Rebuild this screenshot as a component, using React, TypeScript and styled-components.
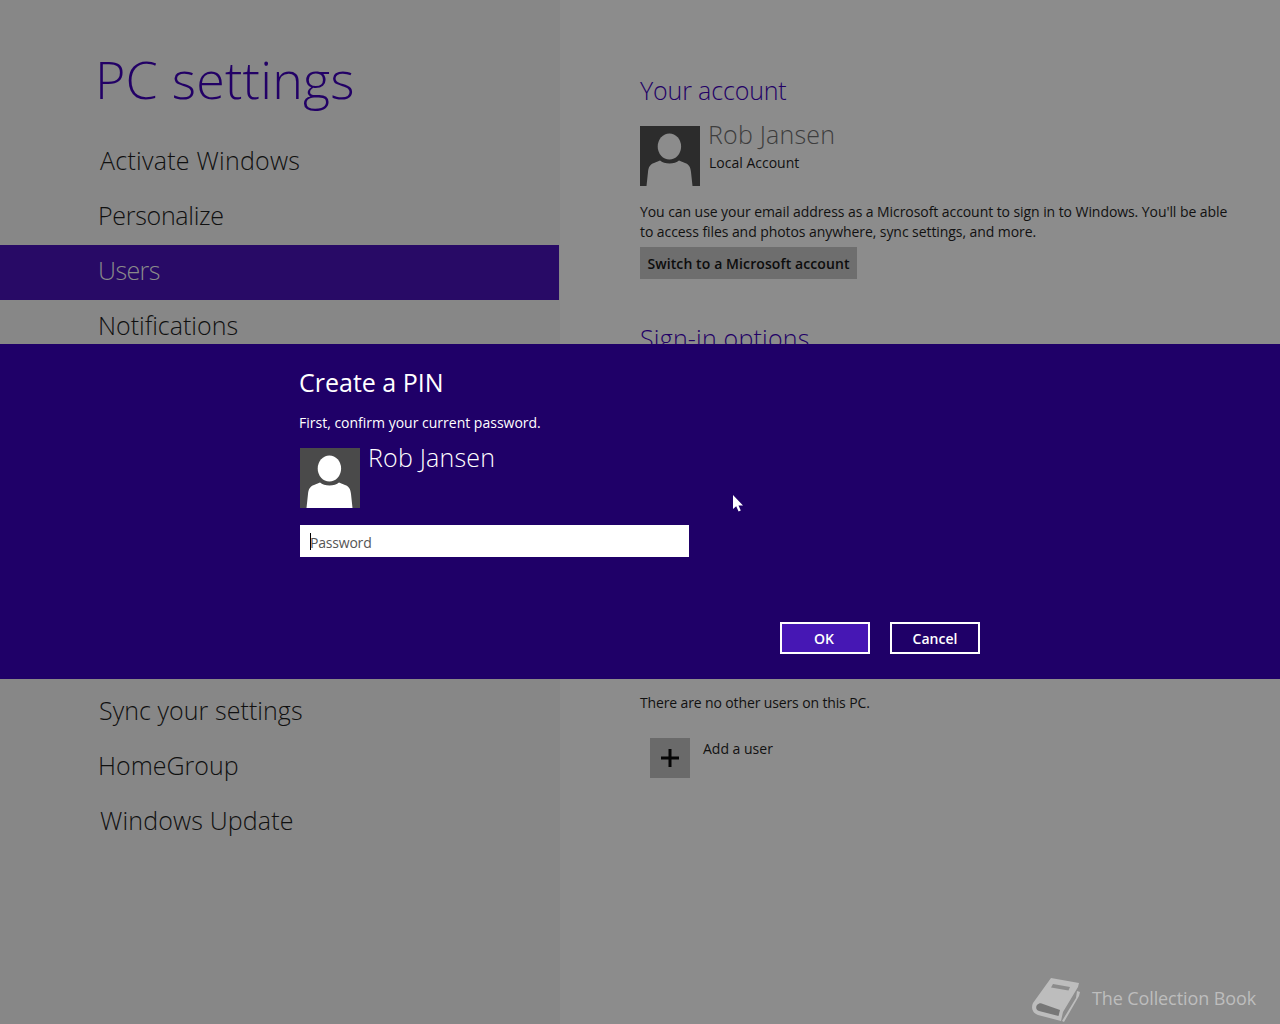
import styled, { createGlobalStyle } from "styled-components";

const GlobalStyle = createGlobalStyle`
  html, body {
    margin: 0;
    padding: 0;
    height: 100%;
    overflow: hidden;
    background: #8c8c8c;
    font-family: "Open Sans", "Noto Sans", sans-serif;
  }
`;

const Page = styled.div`
  position: relative;
  display: grid;
  grid-template-columns: 560px 1fr;
  width: 1280px;
  height: 1024px;
  overflow: hidden;
  background: #8c8c8c;
`;

const Sidebar = styled.div`
  background: #878787;
  padding-top: 49px;
`;

const Title = styled.h1`
  margin: 0 0 26px 95px;
  font-size: 52px;
  line-height: 60px;
  font-weight: 300;
  letter-spacing: 0.2px;
  color: #220066;
`;

const Nav = styled.div`
  display: flex;
  flex-direction: column;
`;

const NavItem = styled.div<{ $active?: boolean; $inset?: number; $tracking?: number }>`
  height: 55px;
  width: 559px;
  box-sizing: border-box;
  padding-left: ${(p) => p.$inset ?? 98}px;
  font-size: 25px;
  line-height: 51px;
  font-weight: 300;
  letter-spacing: ${(p) => p.$tracking ?? 0}px;
  color: ${(p) => (p.$active ? "#8a8a8a" : "#101010")};
  background: ${(p) => (p.$active ? "#280a66" : "transparent")};
`;

const NavGap = styled.div`
  height: 330px;
`;

const Content = styled.div`
  padding: 72px 0 0 80px;
`;

const Heading = styled.h2`
  margin: 0;
  font-size: 25px;
  line-height: 36px;
  font-weight: 300;
  letter-spacing: -0.15px;
  color: #220066;
`;

const AccountRow = styled.div`
  display: flex;
  gap: 8px;
  margin-top: 18px;
`;

const AccountText = styled.div`
  display: flex;
  flex-direction: column;
`;

const AccountName = styled.div`
  font-size: 25px;
  line-height: 16px;
  font-weight: 300;
  letter-spacing: 0.2px;
  color: #3d3d3d;
`;

const AccountType = styled.div`
  margin: 11px 0 0 1px;
  font-size: 14px;
  line-height: 20px;
  color: #111;
`;

const Body = styled.p`
  margin: 16px 0 0;
  width: 600px;
  font-size: 14px;
  line-height: 20px;
  letter-spacing: -0.07px;
  color: #111;
`;

const GreyButton = styled.button`
  display: block;
  margin-top: 5px;
  height: 32px;
  width: 217px;
  padding: 0;
  border: 0;
  background: #6e6e6e;
  color: #0c0c0c;
  font-family: inherit;
  font-size: 14px;
  font-weight: 600;
  letter-spacing: 0.1px;
`;

const SignInHeading = styled(Heading)`
  margin-top: 41px;
  letter-spacing: 0.2px;
`;

const UsersBlock = styled.div`
  margin-top: 337px;
`;

const NoUsers = styled.div`
  font-size: 14px;
  line-height: 20px;
  letter-spacing: -0.13px;
  color: #111;
`;

const AddUserRow = styled.div`
  display: flex;
  gap: 13px;
  margin: 25px 0 0 10px;
`;

const PlusTile = styled.div`
  display: flex;
  align-items: center;
  justify-content: center;
  width: 40px;
  height: 40px;
  background: #6a6a6a;
  color: #050505;
`;

const AddLabel = styled.div`
  margin-top: 1px;
  font-size: 14px;
  line-height: 20px;
  color: #111;
`;

const Dialog = styled.div`
  position: absolute;
  left: 0;
  top: 344px;
  width: 1280px;
  height: 335px;
  box-sizing: border-box;
  padding: 18px 300px 0 299px;
  background: #1f0068;
  color: #fff;
`;

const DialogTitle = styled.h3`
  margin: 0;
  font-size: 25px;
  line-height: 40px;
  font-weight: 400;
`;

const DialogHint = styled.div`
  margin-top: 11px;
  font-size: 14px;
  line-height: 20px;
`;

const DialogUser = styled.div`
  display: flex;
  gap: 8px;
  margin: 15px 0 0 1px;
`;

const DialogName = styled.div`
  font-size: 25px;
  line-height: 18px;
  font-weight: 300;
  letter-spacing: 0.2px;
`;

const PasswordField = styled.div`
  display: flex;
  align-items: center;
  width: 389px;
  height: 32px;
  margin: 17px 0 0 1px;
  box-sizing: border-box;
  padding: 2px 0 0 10px;
  background: #fff;
  color: #555;
  font-size: 14px;
  letter-spacing: -0.2px;
`;

const Caret = styled.span`
  width: 1px;
  height: 17px;
  margin: -2px -1px 0 0;
  background: #000;
`;

const DialogActions = styled.div`
  display: flex;
  justify-content: flex-end;
  gap: 20px;
  margin-top: 65px;
`;

const DialogButton = styled.button<{ $primary?: boolean }>`
  width: 90px;
  height: 32px;
  padding: ${(p) => (p.$primary ? "0 2px 0 0" : "0")};
  border: 2px solid #fff;
  background: ${(p) => (p.$primary ? "#4617b4" : "#1f0068")};
  color: #fff;
  font-family: inherit;
  font-size: 14px;
  font-weight: 600;
`;

const Cursor = styled.svg`
  position: absolute;
  left: 733px;
  top: 495px;
`;

const Watermark = styled.div`
  position: absolute;
  right: 24px;
  bottom: 2px;
  display: flex;
  align-items: center;
  gap: 11px;
  color: #bdbdbd;
  font-size: 18px;
  letter-spacing: -0.1px;
`;

function Avatar({ bg, fg }: { bg: string; fg: string }) {
  return (
    <svg width="60" height="60" viewBox="0 0 60 60" style={{ flex: "none" }}>
      <rect width="60" height="60" fill={bg} />
      <ellipse cx="29.4" cy="20.5" rx="11.7" ry="13" fill={fg} />
      <path d="M6.500 60 L8 46 C8.500 41 10 38.500 14 37 L20 34.500 C24 38.500 35 38.500 39 34.500 L45 37 C49 38.500 50.500 41 51 46 L52.500 60 Z" fill={fg} />
    </svg>
  );
}

function BookLogo() {
  return (
    <svg width="52" height="48" viewBox="0 0 52 48">
      <path d="M22 4 L50 9 L49 13 L34 38 L32 47 L9 41 C3 39 2 33 4 29 Z" fill="#bdbdbd" />
      <path d="M8 31 C10 29 12 29 14 30 L31 36 L29.500 42 L10 37 C7 36 6.500 33 8 31 Z" fill="#777777" />
      <path d="M24 10 L41 13 L39.500 16.500 L22 13.500 Z" fill="#8c8c8c" />
      <path d="M48 17 L51 18 L50 22 L35 48 L33 47 L47 24 Z" fill="#bdbdbd" />
    </svg>
  );
}

export default function App() {
  return (
    <>
      <GlobalStyle />
      <Page>
        <Sidebar>
          <Title>PC settings</Title>
          <Nav>
            <NavItem $inset={100} $tracking={0.25}>Activate Windows</NavItem>
            <NavItem $tracking={-0.3}>Personalize</NavItem>
            <NavItem $active $tracking={-0.6}>Users</NavItem>
            <NavItem>Notifications</NavItem>
            <NavGap />
            <NavItem $inset={99} $tracking={0.06}>Sync your settings</NavItem>
            <NavItem>HomeGroup</NavItem>
            <NavItem $inset={100} $tracking={0.15}>Windows Update</NavItem>
          </Nav>
        </Sidebar>
        <Content>
          <Heading>Your account</Heading>
          <AccountRow>
            <Avatar bg="#2c2c2c" fg="#8c8c8c" />
            <AccountText>
              <AccountName>Rob Jansen</AccountName>
              <AccountType>Local Account</AccountType>
            </AccountText>
          </AccountRow>
          <Body>
            You can use your email address as a Microsoft account to sign in to Windows. You'll be able to access files and photos anywhere, sync settings, and more.
          </Body>
          <GreyButton>Switch to a Microsoft account</GreyButton>
          <SignInHeading>Sign-in options</SignInHeading>
          <UsersBlock>
            <NoUsers>There are no other users on this PC.</NoUsers>
            <AddUserRow>
              <PlusTile>
                <svg width="18" height="18" viewBox="0 0 18 18">
                  <path d="M7.500 0h3v7.500H18v3h-7.500V18h-3v-7.500H0v-3h7.500z" fill="currentColor" />
                </svg>
              </PlusTile>
              <AddLabel>Add a user</AddLabel>
            </AddUserRow>
          </UsersBlock>
        </Content>
        <Dialog>
          <DialogTitle>Create a PIN</DialogTitle>
          <DialogHint>First, confirm your current password.</DialogHint>
          <DialogUser>
            <Avatar bg="#4a4a4a" fg="#ffffff" />
            <DialogName>Rob Jansen</DialogName>
          </DialogUser>
          <PasswordField>
            <Caret />
            Password
          </PasswordField>
          <DialogActions>
            <DialogButton $primary>OK</DialogButton>
            <DialogButton>Cancel</DialogButton>
          </DialogActions>
        </Dialog>
        <Cursor width="11" height="17" viewBox="0 0 11 17">
          <path d="M0 0 L0 14 L3.200 11.300 L5.600 16.500 L7.800 15.500 L5.500 10.500 L10 10.500 Z" fill="#fff" />
        </Cursor>
        <Watermark>
          <BookLogo />
          The Collection Book
        </Watermark>
      </Page>
    </>
  );
}
